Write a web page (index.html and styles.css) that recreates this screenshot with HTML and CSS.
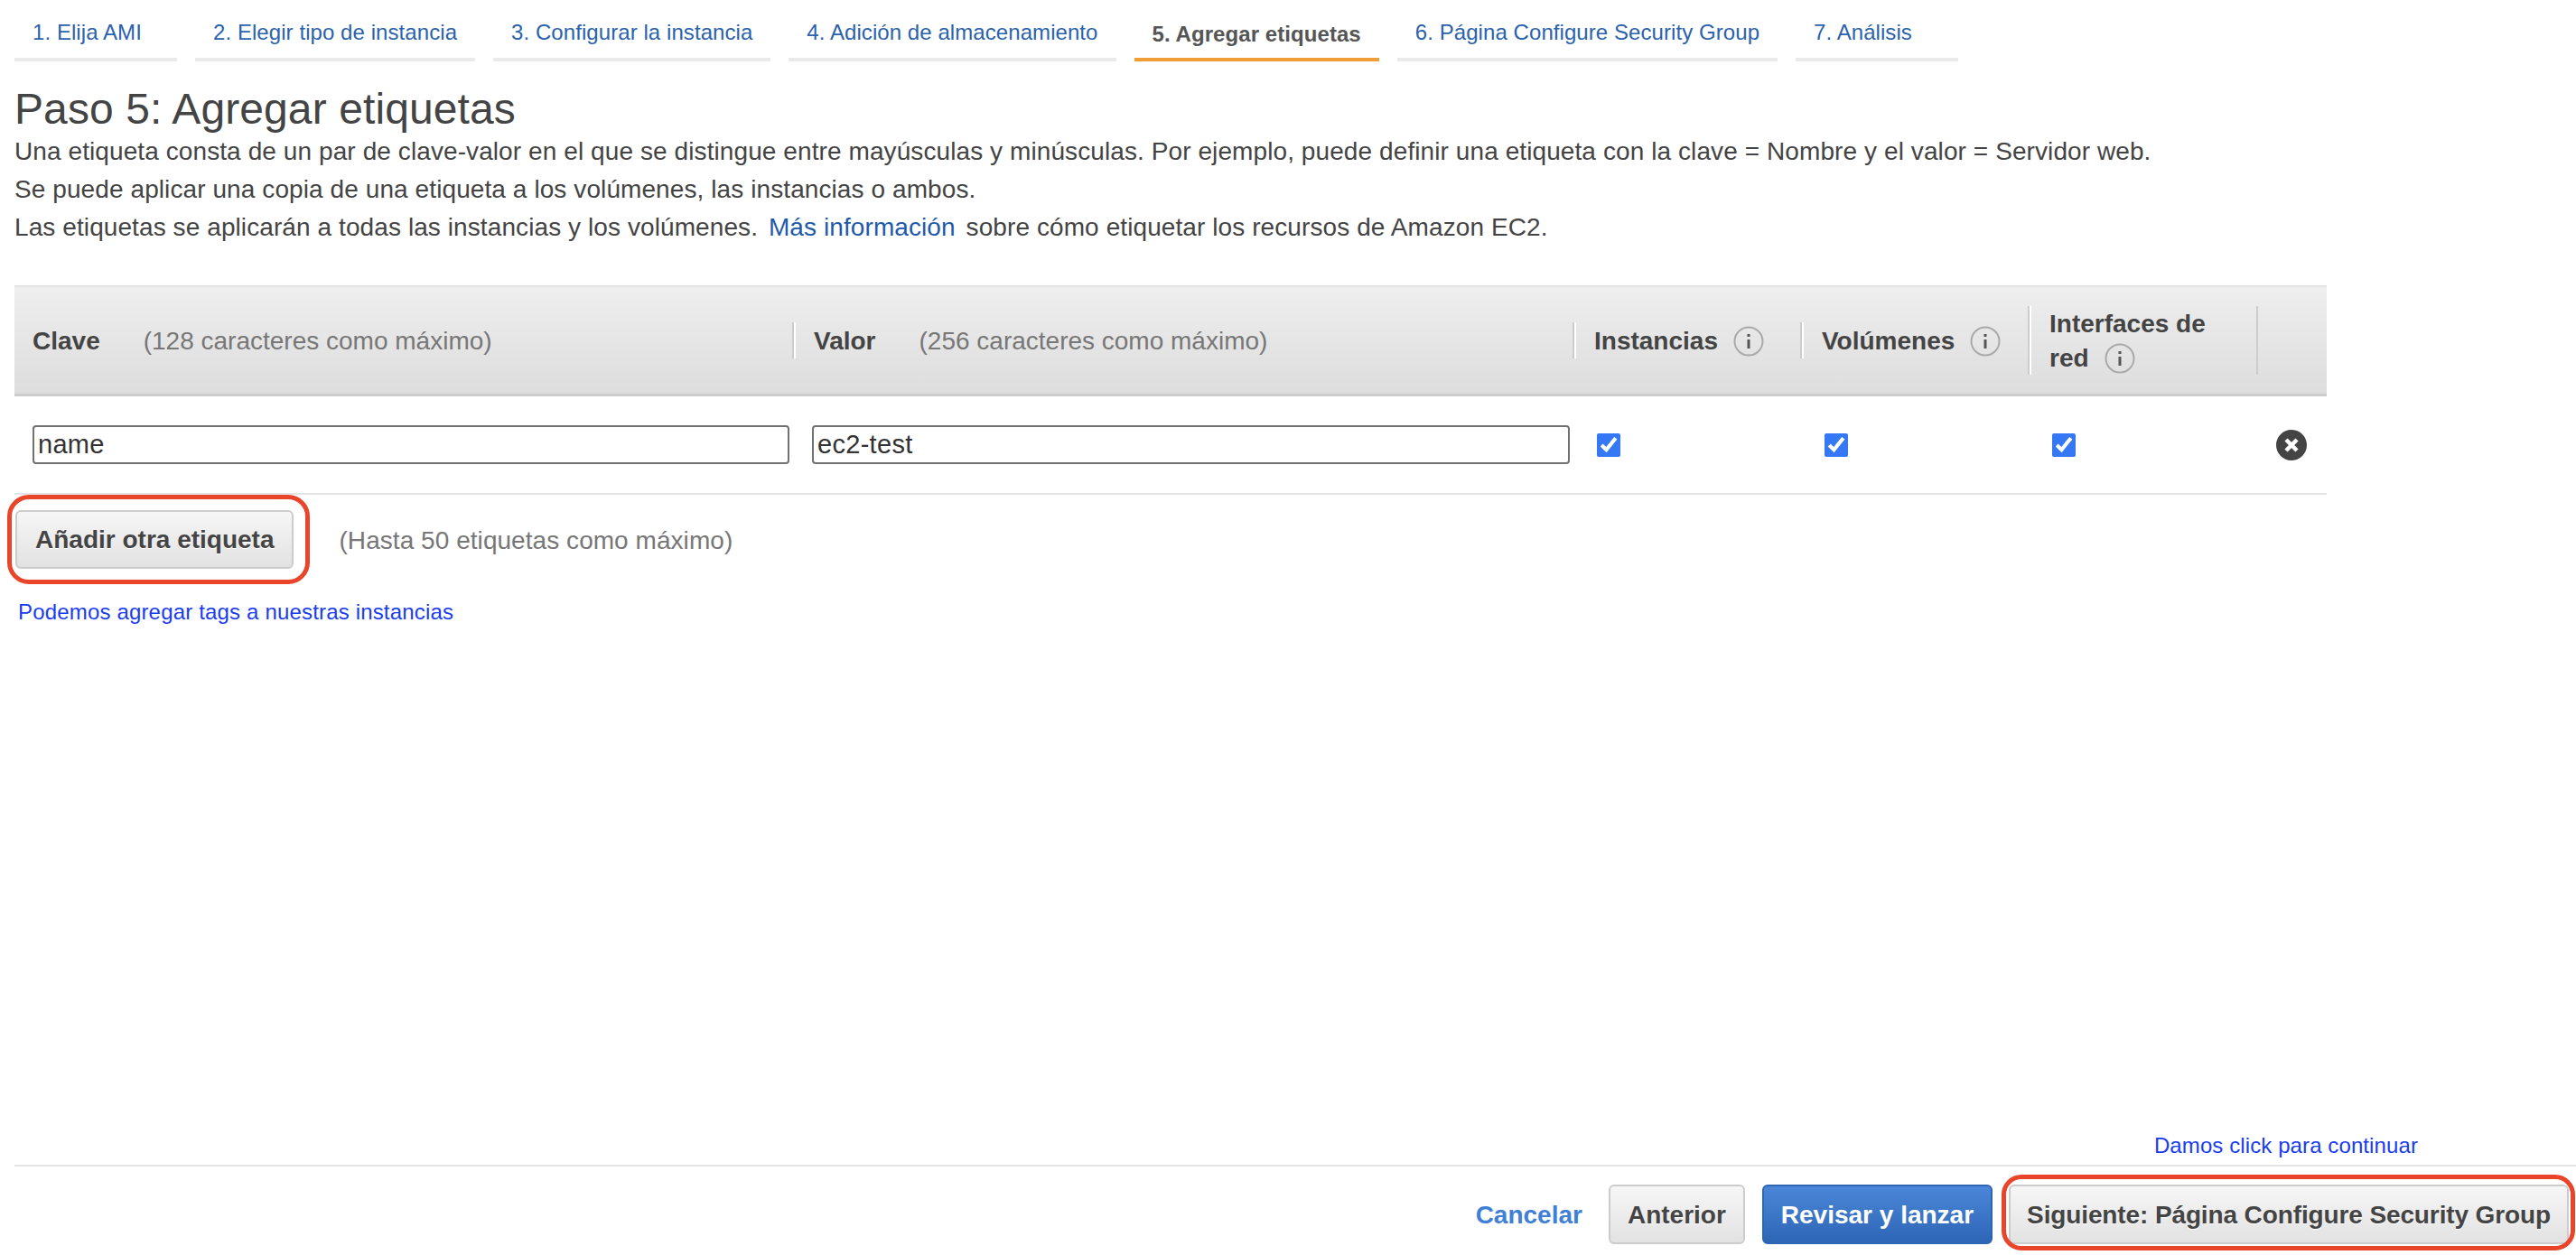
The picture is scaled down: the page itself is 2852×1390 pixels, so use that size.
FILE: index.html
```html
<!DOCTYPE html>
<html lang="es">
<head>
    <meta charset="UTF-8">
    <meta name="viewport" content="width=device-width, initial-scale=1.0">
    <title>Paso 5: Agregar etiquetas</title>
    <link rel="stylesheet" href="styles.css">
</head>
<body>

<div class="page">
    <ul class="tabs">
        <li class="tab"><a href="#">1. Elija AMI</a></li>
        <li class="tab"><a href="#">2. Elegir tipo de instancia</a></li>
        <li class="tab"><a href="#">3. Configurar la instancia</a></li>
        <li class="tab"><a href="#">4. Adición de almacenamiento</a></li>
        <li class="tab tab-active"><a href="#">5. Agregar etiquetas</a></li>
        <li class="tab"><a href="#">6. Página Configure Security Group</a></li>
        <li class="tab"><a href="#">7. Análisis</a></li>
    </ul>

    <h1>Paso 5: Agregar etiquetas</h1>

    <div class="intro">
        <p>Una etiqueta consta de un par de clave-valor en el que se distingue entre mayúsculas y minúsculas. Por ejemplo, puede definir una etiqueta con la clave = Nombre y el valor = Servidor web.</p>
        <p>Se puede aplicar una copia de una etiqueta a los volúmenes, las instancias o ambos.</p>
        <p>Las etiquetas se aplicarán a todas las instancias y los volúmenes. <a href="#" class="more">Más información</a> sobre cómo etiquetar los recursos de Amazon EC2.</p>
    </div>

    <div class="tags">
        <div class="tags-head">
            <div class="head-cell"><div class="head-in"><b>Clave</b><span class="hint">(128 caracteres como máximo)</span></div></div>
            <div class="head-cell"><div class="head-in head-sep"><b>Valor</b><span class="hint">(256 caracteres como máximo)</span></div></div>
            <div class="head-cell">
                <div class="head-in head-sep"><b>Instancias</b>
                    <svg class="info" viewBox="0 0 34 34"><circle cx="17" cy="17" r="15.5"/><path d="M17 9v3M17 15v10"/></svg>
                </div>
            </div>
            <div class="head-cell">
                <div class="head-in head-sep"><b>Volúmenes</b>
                    <svg class="info" viewBox="0 0 34 34"><circle cx="17" cy="17" r="15.5"/><path d="M17 9v3M17 15v10"/></svg>
                </div>
            </div>
            <div class="head-cell">
                <div class="head-in head-sep head-tall"><div class="head-wrap"><b>Interfaces de</b><br><b>red</b>
                    <svg class="info info-wrapped" viewBox="0 0 34 34"><circle cx="17" cy="17" r="15.5"/><path d="M17 9v3M17 15v10"/></svg>
                </div></div>
            </div>
            <div class="head-cell"><div class="head-in head-sep head-tall head-last"></div></div>
        </div>

        <div class="tags-row">
            <div class="row-cell"><input class="text-input" type="text" value="name"></div>
            <div class="row-cell"><input class="text-input" type="text" value="ec2-test"></div>
            <div class="row-cell row-check"><input class="check" type="checkbox" checked></div>
            <div class="row-cell row-check"><input class="check" type="checkbox" checked></div>
            <div class="row-cell row-check"><input class="check" type="checkbox" checked></div>
            <div class="row-cell row-close">
                <svg class="close" viewBox="0 0 34 34"><circle cx="17" cy="17" r="17"/><path d="M11 11l12 12M23 11L11 23"/></svg>
            </div>
        </div>
    </div>

    <div class="add-row">
        <span class="mark mark-add"><button class="btn">Añadir otra etiqueta</button></span>
        <span class="add-hint">(Hasta 50 etiquetas como máximo)</span>
    </div>

    <p class="note note-tags">Podemos agregar tags a nuestras instancias</p>

    <div class="footer">
        <p class="note note-next">Damos click para continuar</p>
        <div class="actions">
            <a href="#" class="cancel">Cancelar</a>
            <button class="btn">Anterior</button>
            <button class="btn btn-primary">Revisar y lanzar</button>
            <span class="mark mark-next"><button class="btn btn-next">Siguiente: Página Configure Security Group</button></span>
        </div>
    </div>
</div>

</body>
</html>
```

FILE: styles.css
```css
html, body {
    margin: 0;
    padding: 0;
    background-color: #fff;
}

body {
    font-family: "Liberation Sans", Arial, sans-serif;
    font-size: 28px;
    line-height: 42px;
    color: #444;
}

.page {
    height: 1390px;
    overflow: hidden;
    display: flex;
    flex-direction: column;
    padding-left: 16px;
    box-sizing: border-box;
}

/* Step tabs */
.tabs {
    display: flex;
    gap: 20px;
    list-style: none;
    margin: 0;
    padding: 0;
}

.tab {
    min-width: 180px;
    box-sizing: border-box;
    height: 68px;
    padding: 16px 20px 0;
    border-bottom: 4px solid #eaeaea;
    font-size: 24px;
    line-height: 40px;
    letter-spacing: 0.07px;
}

.tab a {
    color: #2a62ab;
    text-decoration: none;
}

.tab-active {
    border-bottom-color: #f19e38;
    padding-top: 18px;
}

.tab-active a {
    color: #555;
    font-weight: bold;
}

h1 {
    margin: 27px 0 0;
    font-size: 48px;
    font-weight: normal;
    line-height: 52px;
    letter-spacing: 0.1px;
    color: #444;
}

.intro {
    letter-spacing: 0.09px;
}

.intro p {
    margin: 0;
}

.more {
    color: #1f5aa8;
    text-decoration: none;
    margin: 0 4px;
}

/* Tags table */
.tags {
    width: 2560px;
    margin-top: 43px;
}

.tags-head, .tags-row {
    display: grid;
    grid-template-columns: 863px 864px 252px 252px 251px 78px;
}

.tags-head {
    height: 123px;
    box-sizing: border-box;
    border-top: 2px solid #e4e4e4;
    border-bottom: 3px solid #ccc;
    background: linear-gradient(#eee, #ddd);
}

.head-cell {
    display: flex;
    align-items: center;
}

.head-in {
    display: flex;
    align-items: center;
    width: 100%;
    height: 40px;
    padding: 2px 0 0 20px;
    box-sizing: border-box;
}

.head-in b {
    font-weight: bold;
    color: #444;
}

.head-sep {
    border-left: 2px solid #fff;
    box-shadow: -2px 0 0 #ccc;
}

.head-tall {
    height: 76px;
}

.head-last {
    border-left: 2px solid #ccc;
    box-shadow: none;
}

.head-wrap {
    line-height: 38px;
}

.hint {
    margin-left: 48px;
    color: #777;
}

.info {
    width: 34px;
    height: 34px;
    margin-left: 17px;
    flex-shrink: 0;
}

.info-wrapped {
    margin-left: 10px;
    vertical-align: -8px;
}

.info circle {
    fill: none;
    stroke: #aaa;
    stroke-width: 2;
}

.info path {
    fill: none;
    stroke: #555;
    stroke-width: 3;
}

.tags-row {
    height: 109px;
    box-sizing: border-box;
    border-bottom: 2px solid #e4e4e4;
}

.row-cell {
    display: flex;
    align-items: center;
    padding: 0 5px 0 20px;
}

.text-input {
    width: 100%;
    height: 43px;
    box-sizing: border-box;
    padding: 0 4px;
    border: 2px solid #717171;
    border-radius: 4px;
    background: #fff;
    font-family: inherit;
    font-size: 29px;
    letter-spacing: 0.3px;
    color: #333;
}

.check {
    width: 26px;
    height: 26px;
    margin: 0 0 0 5px;
    accent-color: #3478f6;
}

.row-close {
    justify-content: center;
    padding: 0;
}

.close {
    width: 34px;
    height: 34px;
}

.close circle {
    fill: #444;
}

.close path {
    fill: none;
    stroke: #fff;
    stroke-width: 4.5;
}

/* Buttons */
.btn {
    height: 65px;
    box-sizing: border-box;
    padding: 0 20px;
    border: 2px solid #ccc;
    border-radius: 6px;
    background: linear-gradient(#f6f6f6, #e2e2e2);
    font-family: inherit;
    font-size: 28px;
    font-weight: bold;
    color: #444;
    text-shadow: 0 1px 0 #fff;
}

.btn-primary {
    border-color: #2f66b3;
    background: linear-gradient(#4b86d8, #2e66b6);
    color: #fff;
    text-shadow: none;
}

.add-row {
    display: flex;
    align-items: center;
    gap: 50px;
    margin-top: 17px;
    padding-left: 1px;
}

.add-hint {
    margin-top: 2px;
    letter-spacing: 0.05px;
    color: #777;
}

/* Red annotation frames drawn over the screenshot */
.mark {
    position: relative;
    display: block;
}

.mark::after {
    content: "";
    position: absolute;
    border: 5px solid #e8452a;
    pointer-events: none;
}

.mark-add::after {
    top: -17px;
    right: -18px;
    bottom: -17px;
    left: -9px;
    border-radius: 24px;
}

.mark-next::after {
    top: -11px;
    right: -7px;
    bottom: -7px;
    left: -8px;
    border-radius: 22px;
}

.note {
    margin: 0;
    font-size: 24px;
    line-height: 36px;
    color: #1a3cf0;
}

.note-tags {
    margin-top: 30px;
    padding-left: 4px;
    letter-spacing: 0.17px;
}

/* Bottom bar */
.footer {
    margin-top: auto;
}

.note-next {
    padding-right: 175px;
    text-align: right;
    letter-spacing: 0.1px;
}

.actions {
    display: flex;
    align-items: center;
    justify-content: flex-end;
    height: 100px;
    margin-top: 3px;
    padding: 20px 8px 12px 0;
    box-sizing: border-box;
    border-top: 2px solid #e6e6e6;
}

.actions .btn {
    height: 66px;
    padding: 2px 19px 0;
}

.actions .btn + .btn {
    margin-left: 19px;
}

.cancel {
    margin: 2px 29px 0 0;
    font-weight: bold;
    color: #3f7fd6;
    text-decoration: none;
}

.mark-next {
    margin-left: 18px;
}

.actions .btn-next {
    padding: 2px 18px 0;
    letter-spacing: -0.12px;
}
```
